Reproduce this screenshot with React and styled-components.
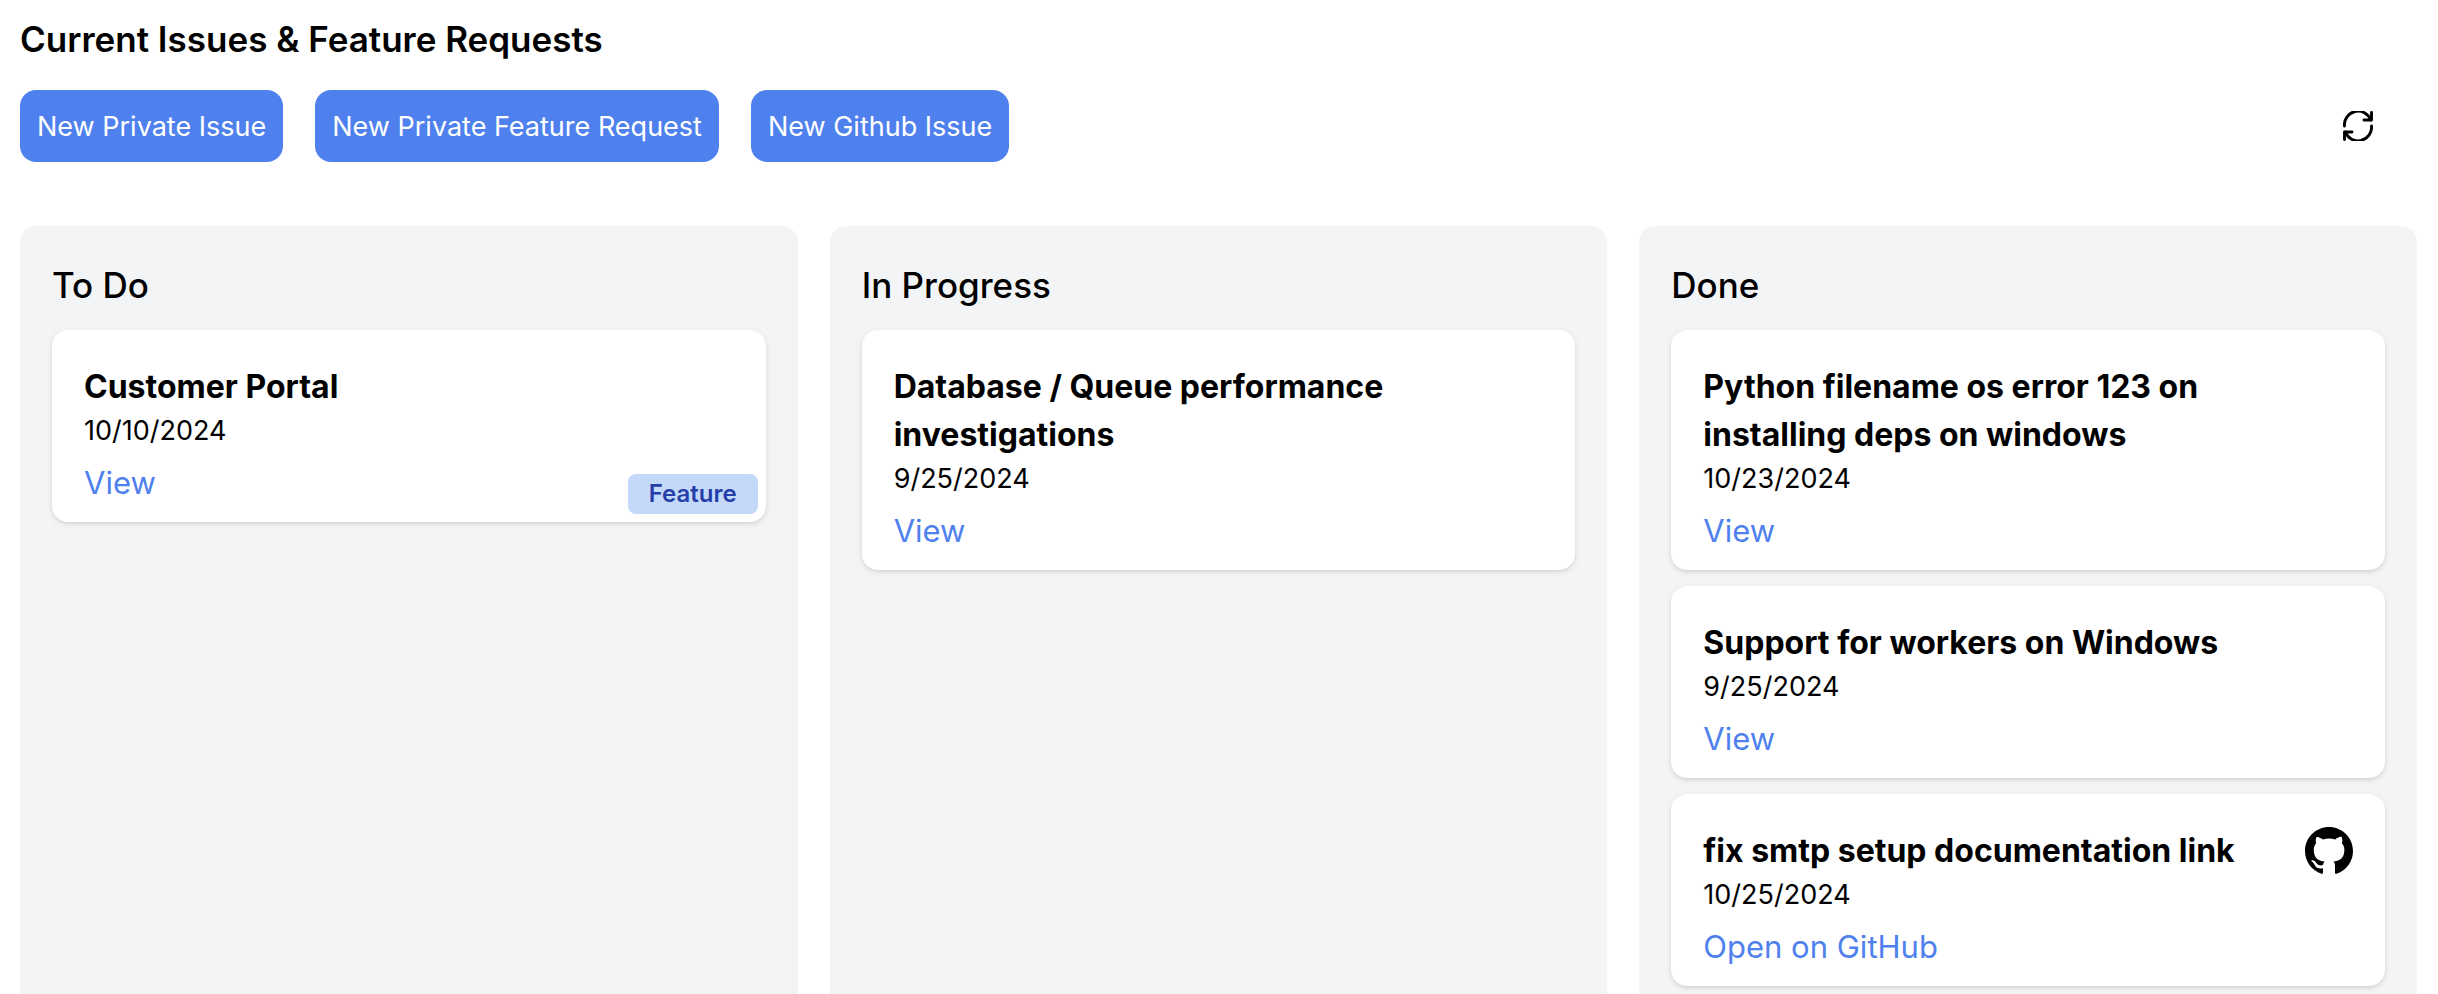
import React from "react";
import styled, { createGlobalStyle } from "styled-components";

const GlobalStyle = createGlobalStyle`
  *, *::before, *::after { box-sizing: border-box; }
  body {
    margin: 0;
    background: #fff;
    color: #000;
    font-family: Inter, "Liberation Sans", sans-serif;
  }
  h1, h2, h3, p { margin: 0; }
`;

const Page = styled.main`
  display: flex;
  flex-direction: column;
  min-height: 100vh;
  padding: 12px 21px 0 20px;
`;

const PageTitle = styled.h1`
  font-size: 35px;
  line-height: 54px;
  font-weight: 600;
`;

const Toolbar = styled.div`
  display: flex;
  align-items: center;
  gap: 32px;
  margin: 24px 0 64px;
  padding-right: 33px;
`;

const ActionButton = styled.button`
  height: 72px;
  padding: 2px 17px 0;
  border: 0;
  border-radius: 16px;
  background: #4f81ee;
  color: #fff;
  font-family: inherit;
  font-size: 27px;
  font-weight: 400;
  line-height: 40px;
  cursor: pointer;
`;

const RefreshButton = styled.button`
  display: flex;
  align-items: center;
  justify-content: center;
  width: 52px;
  height: 52px;
  margin-left: auto;
  padding: 0;
  border: 0;
  background: none;
  color: inherit;
  cursor: pointer;
`;

const Board = styled.div`
  display: grid;
  grid-template-columns: repeat(3, minmax(0, 1fr));
  gap: 32px;
  flex: 1;
`;

const Column = styled.section`
  display: flex;
  flex-direction: column;
  padding: 32px 32px 8px;
  border-radius: 16px 16px 0 0;
  background: #f3f4f6;
`;

const ColumnTitle = styled.h2`
  margin-bottom: 18px;
  font-size: 35px;
  line-height: 54px;
  font-weight: 500;
`;

const CardList = styled.div`
  display: flex;
  flex-direction: column;
  gap: 16px;
`;

const Card = styled.article`
  position: relative;
  padding: 33px 32px 15px;
  border-radius: 16px;
  background: #fff;
  box-shadow: 0 2px 6px rgba(0, 0, 0, 0.1), 0 2px 4px -2px rgba(0, 0, 0, 0.1);
`;

const CardHeader = styled.div`
  display: flex;
  justify-content: space-between;
  gap: 32px;
`;

const CardTitle = styled.h3`
  font-size: 32px;
  line-height: 48px;
  font-weight: 700;
`;

const CardDate = styled.p`
  font-size: 27px;
  line-height: 40px;
`;

const CardLink = styled.a`
  display: inline-block;
  margin-top: 8px;
  color: #4f81ee;
  font-size: 31px;
  line-height: 48px;
  text-decoration: none;
  vertical-align: top;
`;

const Badge = styled.span`
  position: absolute;
  right: 8px;
  bottom: 8px;
  padding: 0 21px;
  border-radius: 8px;
  background: #c4d9fa;
  color: #263ea8;
  font-size: 24px;
  line-height: 40px;
  font-weight: 600;
`;

const LogoSlot = styled.span`
  flex: none;
  width: 48px;
  height: 48px;
`;

function RefreshIcon() {
  return (
    <svg width="30" height="30" viewBox="0 0 30 30" fill="none" stroke="currentColor" strokeWidth="2.9" strokeLinecap="round" strokeLinejoin="round" aria-hidden="true">
      <path d="M1.5 15A13.5 13.5 0 0 1 27.6 9" />
      <path d="M28.5 1.5V9H21" />
      <path d="M28.5 15A13.5 13.5 0 0 1 2.4 21" />
      <path d="M1.5 28.5V21H9" />
    </svg>
  );
}

function GithubLogo() {
  return (
    <svg width="48" height="48" viewBox="0 0 16 16" fill="currentColor" role="img" aria-label="GitHub">
      <path d="M8 0C3.58 0 0 3.58 0 8c0 3.54 2.29 6.53 5.47 7.59.4.07.55-.17.55-.38 0-.19-.01-.82-.01-1.49-2.01.37-2.53-.49-2.69-.94-.09-.23-.48-.94-.82-1.13-.28-.15-.68-.52-.01-.53.63-.01 1.08.58 1.23.82.72 1.21 1.87.87 2.33.66.07-.52.28-.87.51-1.07-1.78-.2-3.64-.89-3.64-3.95 0-.87.31-1.59.82-2.15-.08-.2-.36-1.02.08-2.12 0 0 .67-.21 2.2.82.64-.18 1.32-.27 2-.27s1.36.09 2 .27c1.53-1.04 2.2-.82 2.2-.82.44 1.1.16 1.92.08 2.12.51.56.82 1.27.82 2.15 0 3.07-1.87 3.75-3.65 3.95.29.25.54.73.54 1.48 0 1.07-.01 1.93-.01 2.2 0 .21.15.46.55.38A8.01 8.01 0 0 0 16 8c0-4.42-3.58-8-8-8z" />
    </svg>
  );
}

const actions = ["New Private Issue", "New Private Feature Request", "New Github Issue"];

const columns = [
  {
    title: "To Do",
    cards: [{ title: "Customer Portal", date: "10/10/2024", badge: "Feature" }],
  },
  {
    title: "In Progress",
    cards: [{ title: "Database / Queue performance investigations", date: "9/25/2024" }],
  },
  {
    title: "Done",
    cards: [
      { title: "Python filename os error 123 on installing deps on windows", date: "10/23/2024" },
      { title: "Support for workers on Windows", date: "9/25/2024" },
      { title: "fix smtp setup documentation link", date: "10/25/2024", github: true },
    ],
  },
];

function IssueCard({ issue }) {
  return (
    <Card>
      <CardHeader>
        <CardTitle>{issue.title}</CardTitle>
        <LogoSlot>{issue.github && <GithubLogo />}</LogoSlot>
      </CardHeader>
      <CardDate>{issue.date}</CardDate>
      <CardLink href="#">{issue.github ? "Open on GitHub" : "View"}</CardLink>
      {issue.badge && <Badge>{issue.badge}</Badge>}
    </Card>
  );
}

export default function App() {
  return (
    <>
      <GlobalStyle />
      <Page>
        <PageTitle>Current Issues &amp; Feature Requests</PageTitle>
        <Toolbar>
          {actions.map((label) => (
            <ActionButton key={label} type="button">{label}</ActionButton>
          ))}
          <RefreshButton type="button" aria-label="Refresh">
            <RefreshIcon />
          </RefreshButton>
        </Toolbar>
        <Board>
          {columns.map((column) => (
            <Column key={column.title}>
              <ColumnTitle>{column.title}</ColumnTitle>
              <CardList>
                {column.cards.map((issue) => (
                  <IssueCard key={issue.title} issue={issue} />
                ))}
              </CardList>
            </Column>
          ))}
        </Board>
      </Page>
    </>
  );
}
